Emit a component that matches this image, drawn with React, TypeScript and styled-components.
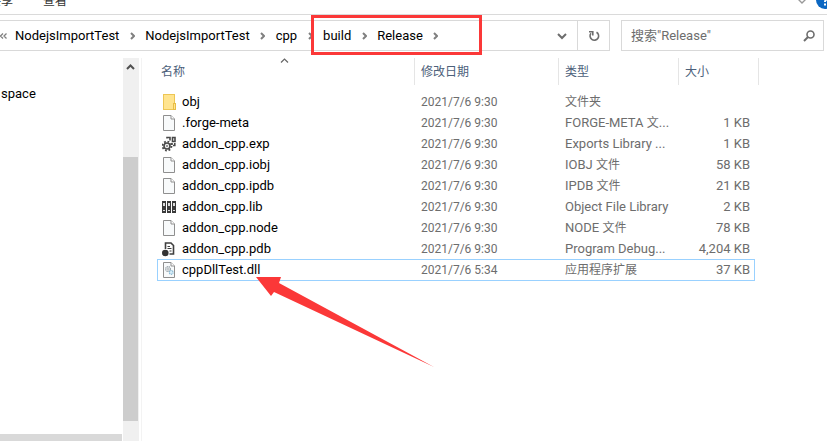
import React from "react";
import styled, { createGlobalStyle } from "styled-components";

const GlobalStyle = createGlobalStyle`
  * { box-sizing: border-box; }
  body {
    margin: 0;
    background: #fff;
    color: #000;
    font: 13px/20px Roboto, "Noto Sans CJK SC", sans-serif;
  }
  button, input { font: inherit; color: inherit; }
`;

const Window = styled.div`
  position: relative;
  display: flex;
  flex-direction: column;
  min-height: 100vh;
  overflow: hidden;
`;

const Ribbon = styled.header`
  display: flex;
  align-items: flex-end;
  justify-content: space-between;
  height: 15px;
  overflow: hidden;
  border-bottom: 1px solid #dadada;
`;

const RibbonTabs = styled.nav`
  display: flex;
  gap: 30px;
  margin-left: -11px;
  padding-bottom: 5px;
`;

const PlainButton = styled.button`
  display: flex;
  align-items: center;
  justify-content: center;
  padding: 0;
  border: 0;
  background: none;
  white-space: nowrap;
`;

const RibbonTab = styled(PlainButton)`
  font-size: 12px;
  line-height: 16px;
  color: #333;
`;

const RibbonTools = styled.div`
  display: flex;
  gap: 9px;
  margin-right: -7px;
  padding-bottom: 5px;
`;

const Toolbar = styled.div`
  display: flex;
  gap: 11px;
  padding: 5px 3px 7px 0;
`;

const AddressBar = styled.div`
  display: flex;
  flex: 1;
  min-width: 0;
  height: 31px;
  border: 1px solid #d9d9d9;
  border-left: 0;
`;

const Crumbs = styled.nav`
  display: flex;
  flex: 1;
  align-items: center;
  min-width: 0;
  overflow: hidden;
`;

const Crumb = styled.a`
  color: #000;
  text-decoration: none;
  white-space: nowrap;
`;

const Separator = styled.span<{ $width?: number }>`
  display: flex;
  flex: none;
  align-items: center;
  justify-content: center;
  width: ${(p) => p.$width ?? 26}px;
`;

const AddressButton = styled(PlainButton)<{ $divided?: boolean }>`
  width: ${(p) => (p.$divided ? 32 : 30)}px;
  border-left: ${(p) => (p.$divided ? "1px solid #d9d9d9" : "0")};
`;

const Search = styled.label`
  display: flex;
  align-items: center;
  width: 203px;
  height: 31px;
  padding: 0 8px 0 9px;
  border: 1px solid #d9d9d9;
`;

const SearchInput = styled.input`
  flex: 1;
  min-width: 0;
  padding: 0;
  border: 0;
  outline: 0;
  background: none;
  &::placeholder { color: #6d6d6d; opacity: 1; }
`;

const Body = styled.div`
  display: flex;
  flex: 1;
`;

const Sidebar = styled.aside`
  display: flex;
  flex-direction: column;
  justify-content: space-between;
  width: 123px;
  padding-right: 1px;
`;

const TreeItem = styled.a`
  margin-top: 26px;
  padding-left: 1px;
  color: #000;
  text-decoration: none;
`;

const HorizontalThumb = styled.div`
  height: 7px;
  background: #d9d9d9;
`;

const Scrollbar = styled.div`
  display: flex;
  flex-direction: column;
  width: 16px;
  padding-bottom: 20px;
  background: #f0f0f0;
`;

const ScrollUp = styled(PlainButton)`
  height: 18px;
  margin-bottom: 81px;
`;

const Thumb = styled.div`
  flex: 1;
  margin-right: 1px;
  background: #cdcdcd;
`;

const Main = styled.main`
  flex: 1;
  min-width: 0;
  margin-left: 2px;
  padding-left: 15px;
  border-left: 1px solid #f3f3f3;
`;

const FileTable = styled.table`
  width: 602px;
  table-layout: fixed;
  border-collapse: separate;
  border-spacing: 0;
`;

const HeadCell = styled.th<{ $width: number }>`
  position: relative;
  width: ${(p) => p.$width}px;
  height: 27px;
  padding: 0 0 0 6px;
  border-right: 1px solid #e5e5e5;
  color: #4c607a;
  font-size: 12px;
  font-weight: 400;
  text-align: left;
  &:first-child { padding-left: 4px; }
`;

const SortMark = styled.span`
  position: absolute;
  top: 0;
  left: 50%;
  display: flex;
  margin-left: -6px;
`;

const Spacer = styled.tr`
  height: 6px;
`;

const Row = styled.tr<{ $selected?: boolean }>`
  position: relative;
  height: 21px;
  &::after {
    content: "";
    position: absolute;
    inset: 0 4px -1px 0;
    border: 1px solid ${(p) => (p.$selected ? "#99d1ff" : "transparent")};
  }
`;

const Cell = styled.td<{ $right?: boolean }>`
  padding: 0 ${(p) => (p.$right ? 9 : 0)}px 0 6px;
  color: #6d6d6d;
  text-align: ${(p) => (p.$right ? "right" : "left")};
  white-space: nowrap;
`;

const DateCell = styled(Cell)`
  font-size: 12px;
`;

const NameCell = styled(Cell)`
  padding-left: 5px;
  color: #000;
`;

const FileName = styled.span`
  display: flex;
  align-items: center;
  gap: 4px;
`;

const Han = styled.span`
  font-size: 12px;
  line-height: 12px;
`;

const Highlight = styled.div`
  position: absolute;
  top: 15px;
  left: 311px;
  width: 171px;
  height: 40px;
  border: 3px solid #fb3838;
  pointer-events: none;
`;

const Arrow = styled.svg`
  position: absolute;
  top: 276px;
  left: 256px;
  pointer-events: none;
`;

type Dir = "right" | "up" | "down";

const chevrons: Record<Dir, string> = {
  right: "M1 1 L4 4 L1 7",
  up: "M1 6 L4.5 2.5 L8 6",
  down: "M1 2 L5 6 L9 2",
};

function Chevron({ dir, color = "#808080", stroke = 2 }: { dir: Dir; color?: string; stroke?: number }) {
  return (
    <svg width={dir === "right" ? 5 : 10} height="8" fill="none" stroke={color} strokeWidth={stroke}>
      <path d={chevrons[dir]} />
    </svg>
  );
}

type Kind = "folder" | "file" | "exp" | "lib" | "pdb" | "dll";

function Page() {
  return (
    <>
      <path d="M1.5 .5H9L12.5 4V15.5H1.5Z" fill="#f8fafb" stroke="#8f8f8f" />
      <path d="M9 .5V4H12.5" fill="#fff" stroke="#8f8f8f" />
    </>
  );
}

function FileIcon({ kind }: { kind: Kind }) {
  return (
    <svg width="16" height="16" viewBox="0 0 16 16">
      {kind === "folder" && (
        <>
          <rect x="1.5" y=".5" width="11" height="15" fill="#ffe48f" stroke="#edc654" />
          <rect x="11.5" y="9.5" width="2" height="6" fill="#ffe48f" stroke="#e8bd45" />
        </>
      )}
      {kind === "file" && <Page />}
      {kind === "exp" && (
        <>
          <circle cx="5" cy="10" r="4.5" fill="none" stroke="#484848" strokeWidth="1.8" strokeDasharray="1.8 1.73" />
          <circle cx="5" cy="10" r="3" fill="#eee" stroke="#484848" strokeWidth="1.6" />
          <circle cx="5" cy="10" r="1" fill="#777" />
          <path d="M5 2.5V1.5H8V4.5M10.5 1.5H13V5.5H10.5ZM10 7V9M12.8 7V9.5H11" fill="none" stroke="#484848" strokeWidth="1.6" />
        </>
      )}
      {kind === "lib" &&
        [0, 5, 10].map((x) => (
          <g key={x}>
            <rect x={x} y="2" width="4" height="12" fill="#3a3a3a" />
            <rect x={x + 1} y="4" width="2" height="3" fill="#ddd" />
            <rect x={x + 1} y="11" width="2" height="1" fill="#ddd" />
          </g>
        ))}
      {kind === "pdb" && (
        <>
          <path d="M3.5 8V2H9L11.5 4.5V13H7.5" fill="#fff" stroke="#3f3f3f" strokeWidth="1.6" />
          <path d="M5.5 5.5H8M5.5 7.5H9.5M7.5 10H9.5" stroke="#3f3f3f" strokeWidth="1.2" />
          <circle cx="3.3" cy="12" r="3.3" fill="#333" />
        </>
      )}
      {kind === "dll" && (
        <>
          <Page />
          <circle cx="6" cy="7" r="2.4" fill="#e4e8ea" stroke="#98a2a8" strokeWidth="1.2" strokeDasharray="1.2 .6" />
          <circle cx="6" cy="7" r=".7" fill="#8b9499" />
          <circle cx="9.2" cy="10.4" r="1.9" fill="#d7ecf7" stroke="#83b7d3" strokeWidth="1.2" strokeDasharray="1.2 .6" />
        </>
      )}
    </svg>
  );
}

interface Entry {
  name: string;
  kind: Kind;
  time?: string;
  type?: string;
  han?: string;
  tail?: string;
  size?: string;
  selected?: boolean;
}

const files: Entry[] = [
  { name: "obj", kind: "folder", han: "文件夹" },
  { name: ".forge-meta", kind: "file", type: "FORGE-META ", han: "文", tail: "...", size: "1 KB" },
  { name: "addon_cpp.exp", kind: "exp", type: "Exports Library ...", size: "1 KB" },
  { name: "addon_cpp.iobj", kind: "file", type: "IOBJ ", han: "文件", size: "58 KB" },
  { name: "addon_cpp.ipdb", kind: "file", type: "IPDB ", han: "文件", size: "21 KB" },
  { name: "addon_cpp.lib", kind: "lib", type: "Object File Library", size: "2 KB" },
  { name: "addon_cpp.node", kind: "file", type: "NODE ", han: "文件", size: "78 KB" },
  { name: "addon_cpp.pdb", kind: "pdb", type: "Program Debug...", size: "4,204 KB" },
  { name: "cppDllTest.dll", kind: "dll", time: "5:34", han: "应用程序扩展", size: "37 KB", selected: true },
];

const path = ["NodejsImportTest", "NodejsImportTest", "cpp", "build", "Release"];

export default function App() {
  return (
    <Window>
      <GlobalStyle />
      <Ribbon>
        <RibbonTabs>
          <RibbonTab>共享</RibbonTab>
          <RibbonTab>查看</RibbonTab>
        </RibbonTabs>
        <RibbonTools>
          <PlainButton aria-label="Expand ribbon">
            <svg width="10" height="18" fill="none" stroke="#999" strokeWidth="1.4">
              <path d="M1.5 8.5L5 12L8.5 8.5" />
            </svg>
          </PlainButton>
          <PlainButton aria-label="Help">
            <svg width="18" height="18" viewBox="0 0 18 18">
              <circle cx="9" cy="9" r="9" fill="#0b67c2" />
              <path d="M6 6Q6 3.8 9 3.8T12 6.4Q12 7.8 10.4 8.6Q9 9.3 9 11M9 12.5V14.5" fill="none" stroke="#fff" strokeWidth="2" />
            </svg>
          </PlainButton>
        </RibbonTools>
      </Ribbon>
      <Toolbar>
        <AddressBar>
          <Crumbs aria-label="Path">
            <Separator $width={15}>
              <svg width="15" height="8" fill="none" stroke="#808080" strokeWidth="1.3">
                <path d="M3 1.5L.5 4L3 6.5M6.5 1.5L4 4L6.5 6.5" />
              </svg>
            </Separator>
            {path.map((part, i) => (
              <React.Fragment key={i}>
                <Crumb href="#">{part}</Crumb>
                <Separator>
                  <Chevron dir="right" />
                </Separator>
              </React.Fragment>
            ))}
          </Crumbs>
          <AddressButton aria-label="Previous locations">
            <Chevron dir="down" color="#6d6d6d" />
          </AddressButton>
          <AddressButton $divided aria-label="Refresh">
            <svg width="12" height="12" fill="none" stroke="#6d6d6d" strokeWidth="1.6">
              <path d="M8.5 2.2A4.3 4.3 0 1 1 3 3.2" />
              <path d="M1 1.8H4.8V5.5" />
            </svg>
          </AddressButton>
        </AddressBar>
        <Search>
          <SearchInput type="search" aria-label="Search" placeholder={'搜索"Release"'} />
          <svg width="12" height="12" fill="none" stroke="#6d6d6d">
            <circle cx="7.5" cy="4.5" r="3.5" strokeWidth="1.6" />
            <path d="M5 7L1 11" strokeWidth="2" />
          </svg>
        </Search>
      </Toolbar>
      <Body>
        <Sidebar>
          <TreeItem href="#">space</TreeItem>
          <HorizontalThumb />
        </Sidebar>
        <Scrollbar>
          <ScrollUp aria-label="Scroll up">
            <Chevron dir="up" color="#505050" />
          </ScrollUp>
          <Thumb />
        </Scrollbar>
        <Main>
          <FileTable>
            <thead>
              <tr>
                <HeadCell $width={258}>
                  名称
                  <SortMark>
                    <svg width="10" height="6" fill="none" stroke="#666" strokeWidth="1.2">
                      <path d="M1 4.5L4.5 1L8 4.5" />
                    </svg>
                  </SortMark>
                </HeadCell>
                <HeadCell $width={144}>修改日期</HeadCell>
                <HeadCell $width={120}>类型</HeadCell>
                <HeadCell $width={80}>大小</HeadCell>
              </tr>
            </thead>
            <tbody>
              <Spacer />
              {files.map((f) => (
                <Row key={f.name} $selected={f.selected}>
                  <NameCell>
                    <FileName>
                      <FileIcon kind={f.kind} />
                      {f.name}
                    </FileName>
                  </NameCell>
                  <DateCell>2021/7/6 {f.time ?? "9:30"}</DateCell>
                  <Cell>
                    {f.type}
                    {f.han && <Han>{f.han}</Han>}
                    {f.tail}
                  </Cell>
                  <Cell $right>{f.size}</Cell>
                </Row>
              ))}
            </tbody>
          </FileTable>
        </Main>
      </Body>
      <Highlight />
      <Arrow width="180" height="92" fill="#fb3838">
        <path d="M0 1L25 1L23 7L178 91L18 16L15 20Z" />
      </Arrow>
    </Window>
  );
}
